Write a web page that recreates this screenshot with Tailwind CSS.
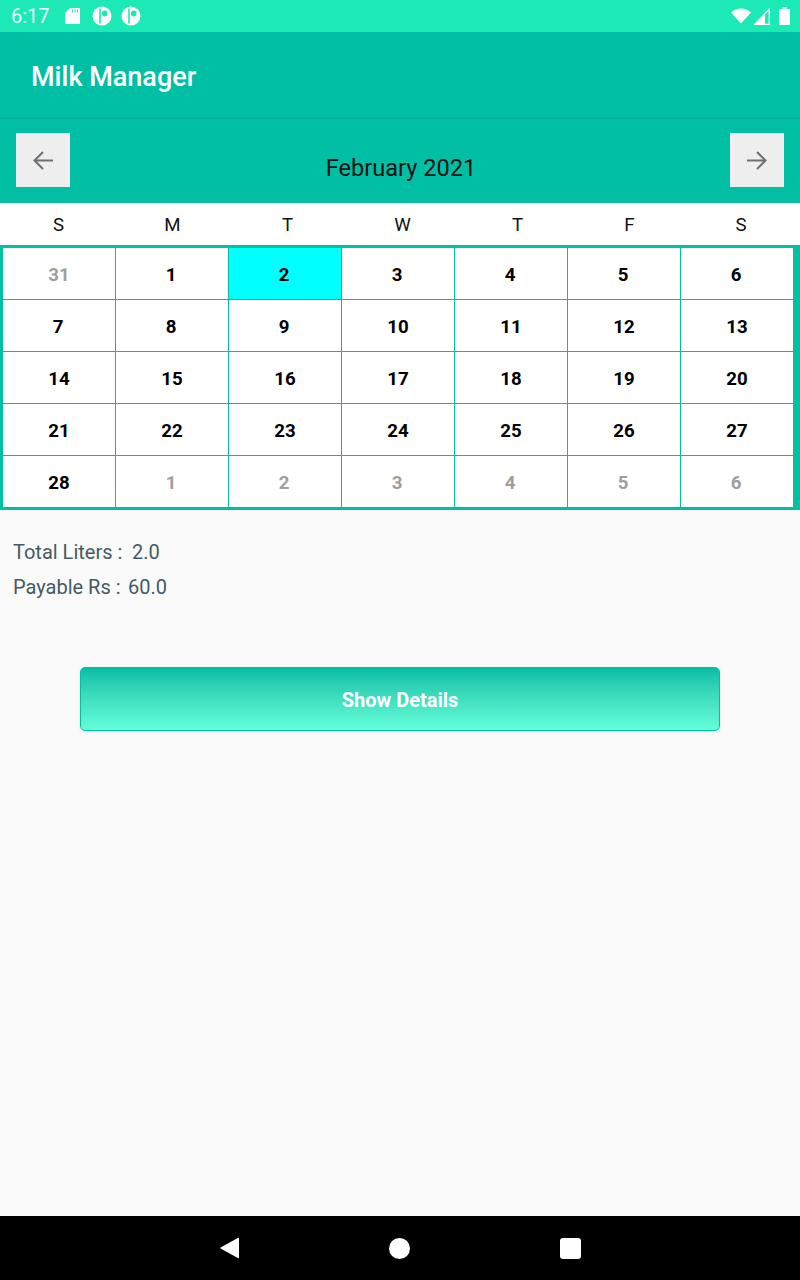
<!DOCTYPE html>
<html lang="en">
  <head>
    <meta charset="utf-8" />
    <meta content="width=device-width, initial-scale=1" name="viewport" />
    <title>Milk Manager</title>
    <script src="https://cdn.jsdelivr.net/npm/@tailwindcss/browser@4"></script>
  </head>

  <body class="bg-[#fafafa] font-['Roboto',sans-serif]">
    <div class="w-[800px] h-[1280px] flex flex-col overflow-hidden">
      <!-- Status bar -->
      <div class="h-[32px] bg-[#1de9b6] flex items-center justify-between pl-[11px] pr-[10px] text-white">
        <div class="flex items-center">
          <span class="text-[20px] leading-none w-[54px] text-white/90">6:17</span>
          <svg width="15" height="16" viewBox="0 0 15 16" class="mr-[12px]"><path d="M5 0h9a1 1 0 0 1 1 1v14a1 1 0 0 1-1 1H1a1 1 0 0 1-1-1V5z" fill="#fff" /><path d="M7.500 1.500v3M10 1.500v3M12.500 1.500v3" stroke="#1de9b6" stroke-width="1" /></svg>
          <svg width="20" height="20" viewBox="0 0 20 20" class="mr-[9px]"><circle cx="10" cy="10" r="9.500" fill="#fff" /><path d="M8 2.500v15" stroke="#1de9b6" stroke-width="1.600" /><rect x="10" y="4.500" width="5.500" height="6" rx="2.700" fill="#1de9b6" /></svg>
          <svg width="20" height="20" viewBox="0 0 20 20"><circle cx="10" cy="10" r="9.500" fill="#fff" /><path d="M8 2.500v15" stroke="#1de9b6" stroke-width="1.600" /><rect x="10" y="4.500" width="5.500" height="6" rx="2.700" fill="#1de9b6" /></svg>
        </div>
        <div class="flex items-center">
          <svg width="20" height="16" viewBox="0 0 20 16" class="mr-[3px]"><path d="M0 4.500C5.500 -0.800 14.500 -0.800 20 4.500L10 15.500z" fill="#fff" /></svg>
          <svg width="16" height="17" viewBox="0 0 16 17" class="mr-[9px]"><path d="M1 16.300L15.300 1v15.300z" fill="none" stroke="#fff" stroke-width="1.300" /><path d="M1 16.500L11 6v10.500z" fill="#fff" /></svg>
          <svg width="11" height="18" viewBox="0 0 11 18"><path d="M3.500 0h4v2H10a1 1 0 0 1 1 1v14a1 1 0 0 1-1 1H1a1 1 0 0 1-1-1V3a1 1 0 0 1 1-1h2.500z" fill="#fff" /></svg>
        </div>
      </div>

      <!-- App bar -->
      <div class="h-[85px] bg-[#00bfa5] flex items-center pl-[31px] pt-[5px] text-white text-[27px] font-medium">Milk Manager</div>
      <div class="h-[2px] bg-[#00b39b]"></div>

      <!-- Month header -->
      <div class="h-[84px] bg-[#00bfa5] flex justify-between pt-[14px] px-[16px]">
        <button type="button" aria-label="Previous month" class="w-[54px] h-[54px] bg-[#eeeeee] flex items-center justify-center">
          <svg width="20" height="19" viewBox="0 0 20 19" fill="none" stroke="#707070" stroke-width="2"><path d="M20 9.500H2M10 1L1.500 9.500 10 18" /></svg>
        </button>
        <div class="pt-[21px] pl-[2px] text-[23.6px] leading-[28px] text-[#111]">February 2021</div>
        <button type="button" aria-label="Next month" class="w-[54px] h-[54px] bg-[#eeeeee] flex items-center justify-center">
          <svg width="20" height="19" viewBox="0 0 20 19" fill="none" stroke="#707070" stroke-width="2"><path d="M0 9.500h18M10 1l8.500 8.500L10 18" /></svg>
        </button>
      </div>

      <!-- Weekdays -->
      <div class="h-[42px] bg-white flex items-center pt-[2px] text-[18.67px] text-[#111]">
        <span class="w-[117px] text-center">S</span>
        <span class="w-[111px] text-center">M</span>
        <span class="w-[119px] text-center">T</span>
        <span class="w-[111px] text-center">W</span>
        <span class="w-[119px] text-center">T</span>
        <span class="w-[105px] text-center">F</span>
        <span class="w-[118px] text-center">S</span>
      </div>

      <!-- Calendar -->
      <div class="grid grid-cols-[repeat(7,112px)] auto-rows-[51px] gap-px bg-[#00bfa5] border-l-[3px] border-r-[7px] border-y-[3px] border-[#00bfa5] text-[18.67px] font-bold text-black">
        <div class="bg-white flex items-center justify-center pt-[2px] text-[#9e9e9e]">31</div>
        <div class="bg-white flex items-center justify-center pt-[2px] pr-[2px]">1</div>
        <div class="bg-[#00ffff] flex items-center justify-center pt-[2px] pr-[2px]">2</div>
        <div class="bg-white flex items-center justify-center pt-[2px] pr-[2px]">3</div>
        <div class="bg-white flex items-center justify-center pt-[2px] pr-[2px]">4</div>
        <div class="bg-white flex items-center justify-center pt-[2px] pr-[2px]">5</div>
        <div class="bg-white flex items-center justify-center pt-[2px] pr-[2px]">6</div>
        <div class="bg-white flex items-center justify-center pt-[2px] pr-[2px]">7</div>
        <div class="bg-white flex items-center justify-center pt-[2px] pr-[2px]">8</div>
        <div class="bg-white flex items-center justify-center pt-[2px] pr-[2px]">9</div>
        <div class="bg-white flex items-center justify-center pt-[2px]">10</div>
        <div class="bg-white flex items-center justify-center pt-[2px]">11</div>
        <div class="bg-white flex items-center justify-center pt-[2px]">12</div>
        <div class="bg-white flex items-center justify-center pt-[2px]">13</div>
        <div class="bg-white flex items-center justify-center pt-[2px]">14</div>
        <div class="bg-white flex items-center justify-center pt-[2px]">15</div>
        <div class="bg-white flex items-center justify-center pt-[2px]">16</div>
        <div class="bg-white flex items-center justify-center pt-[2px]">17</div>
        <div class="bg-white flex items-center justify-center pt-[2px]">18</div>
        <div class="bg-white flex items-center justify-center pt-[2px]">19</div>
        <div class="bg-white flex items-center justify-center pt-[2px]">20</div>
        <div class="bg-white flex items-center justify-center pt-[2px]">21</div>
        <div class="bg-white flex items-center justify-center pt-[2px]">22</div>
        <div class="bg-white flex items-center justify-center pt-[2px]">23</div>
        <div class="bg-white flex items-center justify-center pt-[2px]">24</div>
        <div class="bg-white flex items-center justify-center pt-[2px]">25</div>
        <div class="bg-white flex items-center justify-center pt-[2px]">26</div>
        <div class="bg-white flex items-center justify-center pt-[2px]">27</div>
        <div class="bg-white flex items-center justify-center pt-[2px]">28</div>
        <div class="bg-white flex items-center justify-center pt-[2px] pr-[2px] text-[#9e9e9e]">1</div>
        <div class="bg-white flex items-center justify-center pt-[2px] pr-[2px] text-[#9e9e9e]">2</div>
        <div class="bg-white flex items-center justify-center pt-[2px] pr-[2px] text-[#9e9e9e]">3</div>
        <div class="bg-white flex items-center justify-center pt-[2px] pr-[2px] text-[#9e9e9e]">4</div>
        <div class="bg-white flex items-center justify-center pt-[2px] pr-[2px] text-[#9e9e9e]">5</div>
        <div class="bg-white flex items-center justify-center pt-[2px] pr-[2px] text-[#9e9e9e]">6</div>
      </div>

      <!-- Totals -->
      <div class="flex-1 flex flex-col">
        <div class="pt-[25px] pl-[13px] text-[20px] text-[#455a64] leading-[35px]">
          <div class="flex"><span class="w-[119px]">Total Liters :</span><span>2.0</span></div>
          <div class="flex"><span class="w-[115px]">Payable Rs :</span><span>60.0</span></div>
        </div>
        <button type="button" class="mt-[62px] mx-[80px] h-[64px] pt-[2px] rounded-[5px] border border-[#00bfa5] bg-linear-to-b from-[#00bfa5] to-[#64ffda] text-white text-[20px] font-bold shadow-sm">Show Details</button>
      </div>

      <!-- Navigation bar -->
      <div class="h-[64px] bg-black flex items-center justify-center">
        <svg width="19" height="22" viewBox="0 0 19 22" class="mr-[150px]"><path d="M19 1.500v19a.8.800 0 0 1-1.200.6L.6 11.600a.7.700 0 0 1 0-1.200L17.800.9a.8.800 0 0 1 1.200.6z" fill="#fff" /></svg>
        <div class="w-[21px] h-[21px] rounded-full bg-white mr-[150px]"></div>
        <div class="w-[21px] h-[21px] rounded-[3px] bg-white"></div>
      </div>
    </div>
  </body>
</html>
